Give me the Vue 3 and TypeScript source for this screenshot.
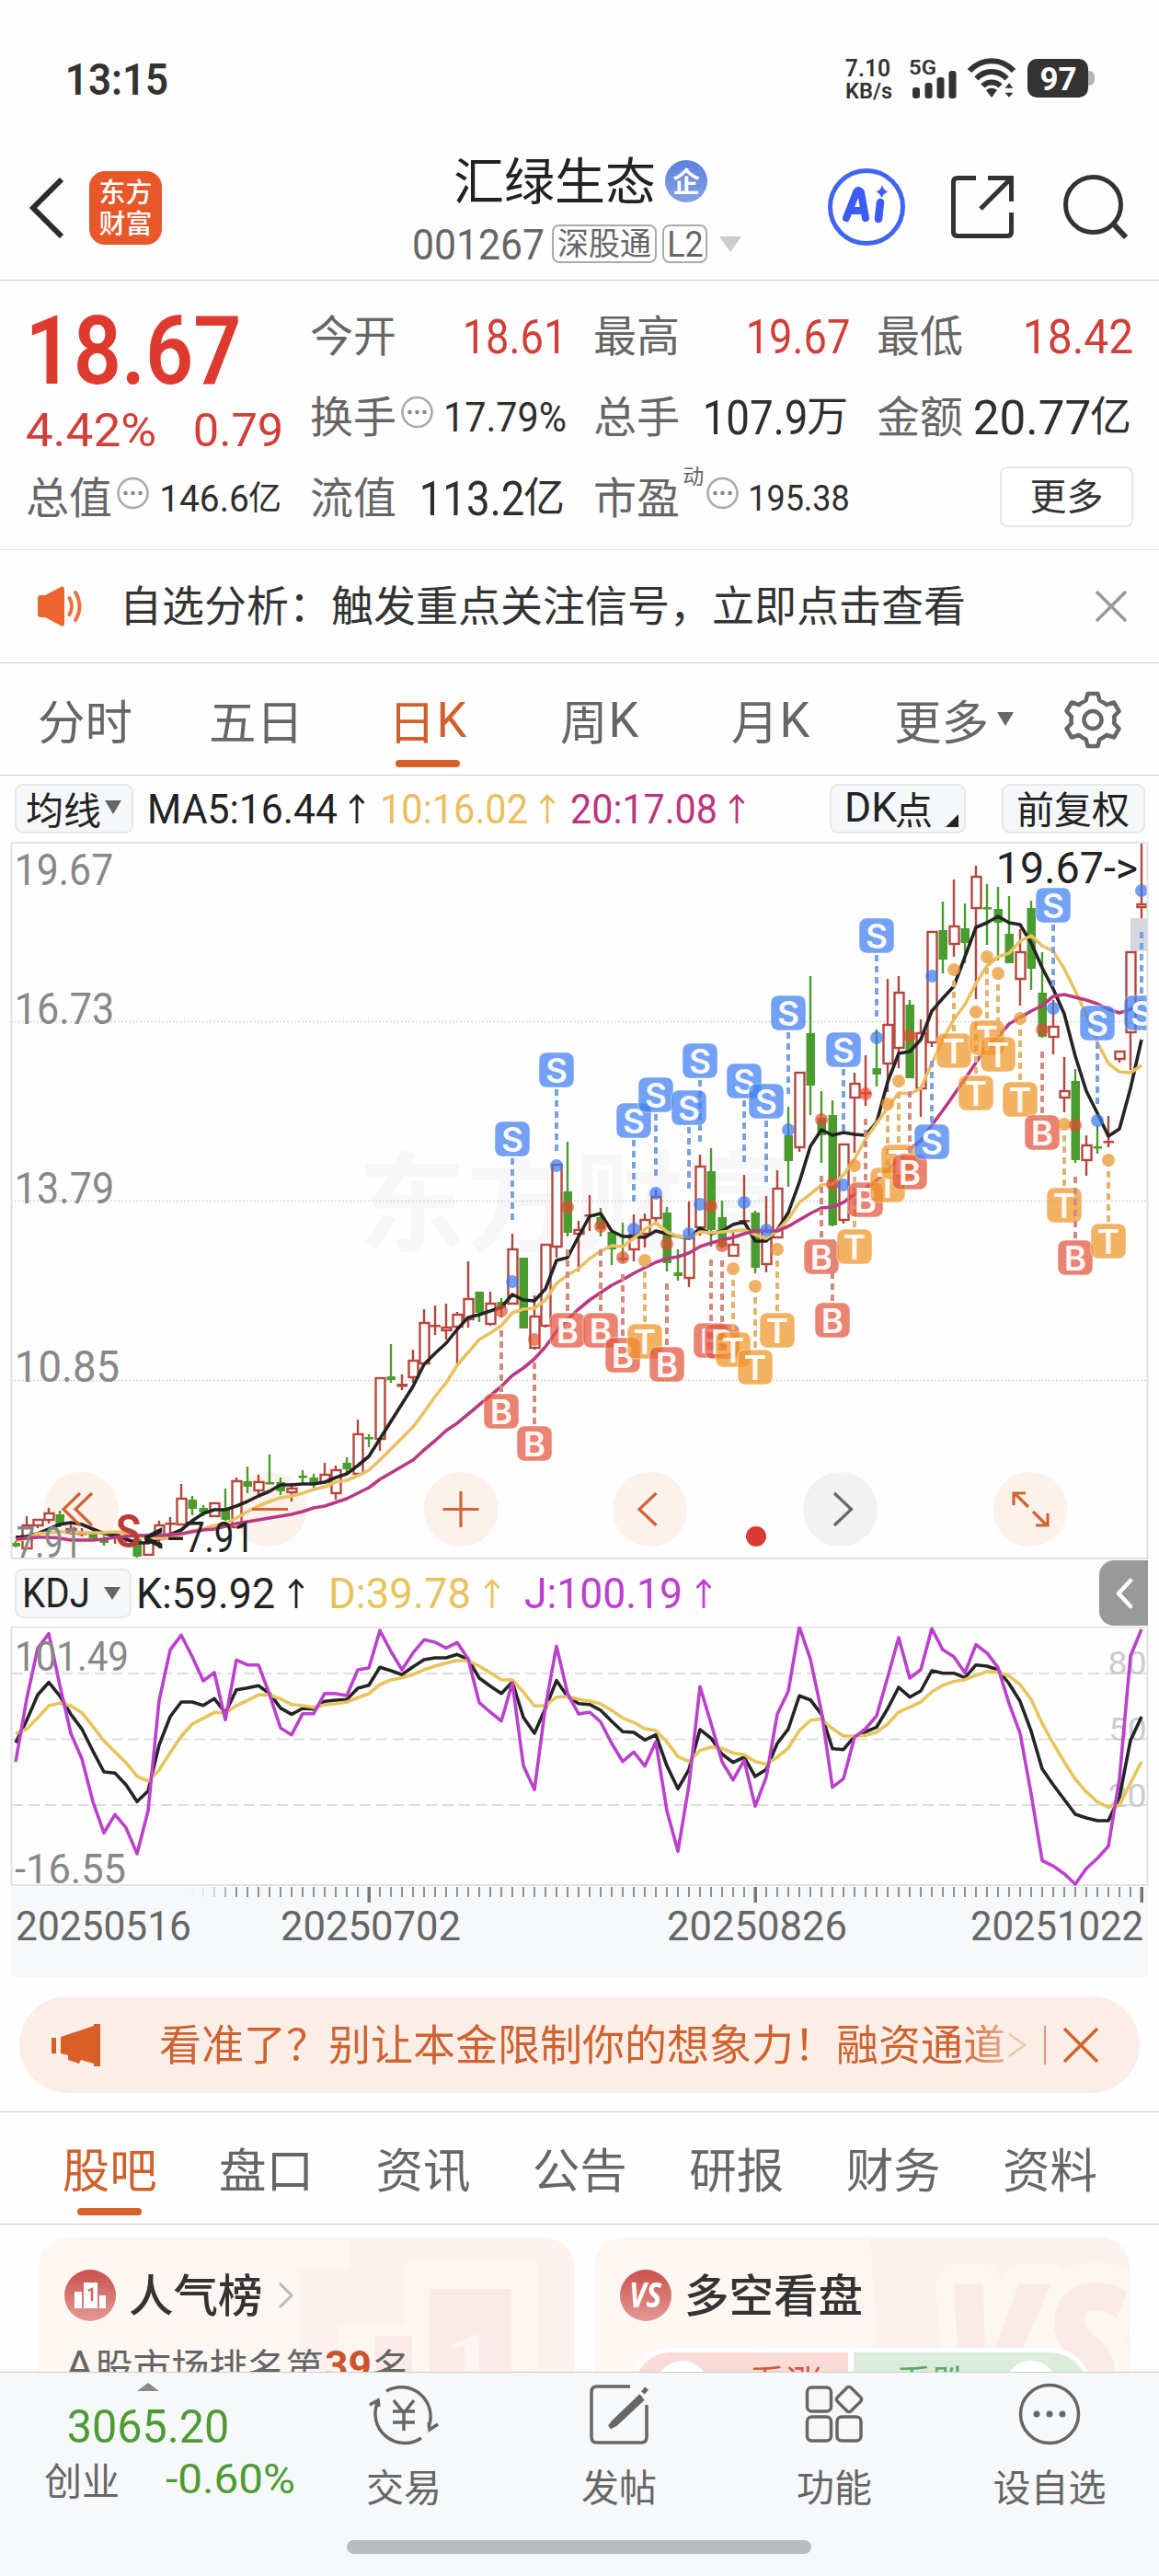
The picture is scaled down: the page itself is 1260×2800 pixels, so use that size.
<script setup lang="ts">
import { h } from 'vue'

interface NumProps { t: string; w: number; cap: number; weight?: number; x?: number; y?: number; fill?: string }

// A line of figures fitted to an exact ink width and cap height.
const Label = (p: NumProps) => {
  const size = p.cap / 0.711
  return h('text', {
    x: (p.x ?? 0) - size * 0.045,
    y: p.y ?? p.cap,
    'font-size': size,
    'font-weight': p.weight ?? 400,
    'font-family': '"Roboto", "Noto Sans CJK SC", sans-serif',
    fill: p.fill ?? 'currentColor',
    textLength: p.w + size * 0.09,
    lengthAdjust: 'spacingAndGlyphs',
  }, p.t)
}
const Num = (p: NumProps) =>
  h('svg', { width: p.w, height: p.cap, viewBox: `0 0 ${p.w} ${p.cap}`, style: 'overflow:visible;flex:none;display:block' }, [
    h(Label, { t: p.t, w: p.w, cap: p.cap, weight: p.weight }),
  ])
const Up = () =>
  h('svg', { width: 18, height: 32, viewBox: '0 0 18 32', fill: 'none', stroke: 'currentColor', 'stroke-width': 2.8, style: 'flex:none;display:block' }, [
    h('path', { d: 'M9 32V2M1.5 10L9 2l7.5 8' }),
  ])
const Dots = () =>
  h('svg', { width: 35, height: 36, viewBox: '0 0 35 36', style: 'flex:none;display:block' }, [
    h('circle', { cx: 17.5, cy: 18, r: 16, fill: 'none', stroke: '#aaa', 'stroke-width': 2.6 }),
    ...[9.5, 17.5, 25.5].map((cx) => h('circle', { cx, cy: 18, r: 2.3, fill: '#888' })),
  ])

const px = (i: number) => 17 + 12 * i

// [rising?, body top, body bottom, high, low]
type Candle = [number, number, number, number, number]
const candles: Candle[] = [
  [0,1677,1681,1675,1682],[1,1657,1683,1648,1683],[1,1651,1658,1651,1661],[1,1644,1652,1639,1656],[0,1646,1658,1642,1660],
  [1,1661,1666,1656,1668],[1,1667,1667,1661,1670],[0,1666,1672,1664,1673],[0,1673,1677,1670,1680],[1,1668,1668,1664,1678],
  [1,1666,1666,1660,1676],[0,1673,1692,1673,1695],[1,1675,1690,1673,1690],[1,1657,1673,1653,1683],[1,1656,1656,1649,1666],
  [1,1628,1657,1613,1657],[0,1630,1640,1626,1647],[0,1639,1644,1636,1648],[1,1633,1648,1633,1648],[0,1640,1652,1618,1653],
  [1,1609,1660,1606,1660],[0,1610,1616,1594,1623],[1,1610,1620,1603,1628],[0,1611,1613,1581,1613],[0,1611,1621,1606,1625],
  [1,1617,1622,1612,1632],[0,1605,1605,1598,1612],[0,1606,1612,1602,1617],[1,1602,1611,1590,1613],[1,1597,1623,1593,1630],
  [0,1590,1597,1584,1602],[1,1558,1602,1543,1602],[0,1563,1563,1559,1573],[1,1497,1564,1497,1577],[0,1496,1500,1461,1503],
  [1,1505,1506,1494,1511],[1,1478,1497,1467,1503],[1,1437,1482,1423,1483],[1,1441,1441,1419,1451],[1,1442,1446,1417,1456],
  [1,1428,1442,1426,1482],[1,1411,1434,1371,1443],[0,1404,1427,1404,1437],[1,1416,1439,1404,1441],[0,1415,1422,1411,1432],
  [1,1357,1417,1341,1417],[0,1367,1444,1367,1444],[1,1430,1465,1408,1467],[1,1352,1441,1352,1443],[1,1265,1355,1265,1367],
  [0,1295,1340,1241,1344],[1,1336,1341,1327,1382],[1,1321,1321,1299,1338],[0,1323,1336,1313,1344],[0,1339,1358,1338,1375],
  [0,1368,1368,1329,1372],[1,1341,1358,1320,1371],[1,1325,1341,1319,1356],[1,1300,1324,1293,1328],[0,1318,1373,1312,1382],
  [0,1383,1387,1358,1392],[1,1344,1389,1306,1399],[1,1267,1334,1255,1343],[0,1273,1337,1248,1355],[0,1323,1355,1305,1357],
  [1,1352,1365,1338,1365],[1,1327,1327,1277,1330],[0,1318,1378,1316,1384],[1,1337,1374,1300,1383],[1,1291,1345,1272,1345],
  [0,1234,1262,1203,1290],[1,1165,1247,1165,1252],[0,1123,1180,1061,1212],[0,1215,1234,1186,1264],[0,1212,1332,1196,1333],
  [1,1243,1326,1243,1330],[1,1177,1193,1166,1253],[1,1188,1188,1147,1202],[0,1161,1168,1119,1181],[1,1113,1156,1064,1187],
  [1,1078,1139,1061,1161],[0,1092,1172,1087,1172],[1,1122,1183,1108,1214],[1,1012,1133,1012,1138],[0,1011,1043,980,1058],
  [1,1006,1026,956,1040],[0,1009,1025,982,1047],[1,952,987,941,1086],[0,987,987,961,1027],[0,988,1003,964,1044],
  [0,1015,1047,974,1047],[1,1034,1064,1010,1093],[0,987,1053,979,1076],[0,1079,1127,1035,1128],[1,1115,1127,1087,1146],
  [1,1185,1193,1149,1209],[0,1175,1261,1162,1264],[1,1244,1261,1234,1278],[0,1247,1247,1223,1254],[1,1241,1241,1213,1247],
  [1,1142,1151,1142,1155],[1,1034,1122,1034,1163],[1,982,986,916,998],
]
const rising = '#b5463d'
const falling = '#4a9c2e'

const ma5 = [1671,1670,1667,1662,1657,1655,1657,1662,1667,1669,1673,1677,1677,1672,1668,1663,1653,1645,1641,1641,1637,1632,1626,1621,1614,1614,1613,1613,1611,1606,1602,1593,1583,1564,1545,1526,1507,1483,1471,1460,1445,1432,1429,1425,1421,1407,1413,1414,1401,1370,1367,1344,1322,1319,1338,1344,1344,1345,1338,1341,1344,1346,1335,1341,1338,1331,1328,1349,1349,1337,1318,1285,1246,1228,1234,1231,1233,1234,1220,1176,1145,1143,1130,1099,1085,1072,1040,1008,1003,996,1003,1005,1025,1052,1075,1102,1148,1186,1210,1235,1227,1183,1130]
const ma10 = [1675,1672,1667,1666,1665,1665,1666,1666,1666,1665,1666,1669,1672,1672,1672,1668,1664,1662,1658,1656,1650,1643,1637,1632,1628,1626,1623,1619,1616,1611,1609,1604,1598,1587,1575,1563,1551,1535,1518,1503,1484,1470,1456,1449,1441,1427,1423,1422,1413,1395,1386,1379,1368,1360,1354,1355,1346,1336,1329,1339,1344,1345,1339,1340,1339,1338,1337,1342,1346,1338,1325,1307,1298,1288,1287,1277,1260,1238,1221,1204,1188,1189,1183,1156,1130,1108,1092,1069,1050,1040,1036,1023,1017,1028,1034,1053,1077,1103,1133,1156,1165,1166,1158]
const ma20 = [1673,1672,1671,1671,1672,1674,1674,1674,1673,1671,1670,1669,1669,1669,1668,1667,1665,1663,1662,1659,1656,1654,1652,1650,1648,1646,1643,1639,1637,1633,1629,1623,1617,1608,1601,1594,1587,1576,1566,1555,1547,1537,1527,1517,1507,1495,1487,1477,1464,1447,1434,1423,1413,1405,1397,1391,1384,1378,1372,1368,1366,1362,1355,1351,1348,1345,1341,1338,1338,1338,1333,1326,1319,1313,1312,1307,1298,1292,1283,1272,1260,1249,1240,1223,1207,1190,1173,1155,1137,1127,1113,1106,1099,1093,1083,1081,1084,1087,1091,1097,1101,1097,1088]
const line = (ys: number[]) => ys.map((y, i) => `${px(i)},${y}`).join(' ')

// [letter, candle index, badge top, signal dot, badge sits below its stem?]
type Signal = ['S' | 'B' | 'T', number, number, number, boolean]
const signals: Signal[] = [
  ['B',44,1515,1425,true],['S',45,1219,1393,false],['B',47,1550,1456,true],['S',49,1144,1267,false],['B',50,1427,1312,true],
  ['B',53,1427,1333,true],['B',55,1454,1367,true],['S',56,1199,1336,false],['T',57,1439,1370,true],['S',58,1171,1297,false],
  ['B',59,1464,1352,true],['S',62,1134,1309,false],['S',61,1185,1341,false],['B',63,1438,1311,true],['B',64,1439,1354,true],
  ['T',65,1448,1379,true],['S',66,1156,1307,false],['T',67,1467,1398,true],['S',68,1178,1337,false],['T',69,1427,1358,true],
  ['S',70,1082,1228,false],['B',73,1347,1217,true],['B',74,1416,1287,true],['S',75,1122,1288,false],['T',76,1336,1267,true],
  ['B',77,1285,1189,true],['S',78,998,1128,false],['T',79,1269,1200,true],['T',80,1244,1175,true],['B',81,1255,1126,true],
  ['S',83,1222,1061,true],['T',85,1123,1054,true],['T',87,1169,1100,true],['T',88,1109,1040,true],['T',89,1127,1058,true],
  ['T',91,1176,1107,true],['B',93,1212,1119,true],['S',94,965,1096,false],['T',95,1291,1222,true],['B',96,1348,1223,true],
  ['S',98,1093,1218,false],['T',99,1330,1261,true],['S',102,1082,968,true],
]
const badge = { S: 'rgba(67,129,242,.75)', B: 'rgba(228,85,62,.73)', T: 'rgba(238,150,40,.73)' }
const stem = { S: '#7aa2de', B: '#d38a7e', T: '#e2b36a' }
const dot = { S: 'rgba(60,120,240,.72)', B: 'rgba(232,72,45,.68)', T: 'rgba(240,150,45,.75)' }

// Oscillator samples, in thirds of a pixel below the indicator header
const kLine = [643,570,487,446,490,550,598,670,738,742,780,835,800,650,558,510,510,521,499,545,470,464,457,482,530,550,531,533,508,504,502,465,455,397,408,421,395,372,366,366,355,371,432,458,482,445,560,612,530,440,492,515,518,537,573,607,609,634,617,718,793,730,600,628,680,707,690,753,730,645,598,490,503,550,662,665,622,607,592,532,462,494,474,408,416,416,431,389,393,405,450,508,605,728,780,828,876,888,897,897,820,635,558]
const dLine = [613,598,562,522,514,522,545,590,637,673,708,752,768,732,675,622,582,563,544,545,522,505,487,486,500,518,522,528,519,516,510,496,483,453,438,431,420,405,393,383,375,375,393,415,437,438,478,523,522,494,492,501,507,516,538,562,577,597,603,640,688,704,668,657,661,677,682,704,713,690,660,603,570,565,597,621,621,619,608,582,543,527,510,477,455,443,437,423,411,412,425,453,502,580,645,705,762,803,836,853,847,775,704]
const jLine = [705,500,335,287,455,612,695,835,937,877,920,1005,865,505,340,292,362,441,414,568,373,389,389,485,595,617,548,548,482,483,489,405,399,277,345,405,350,307,315,334,316,370,512,543,572,448,718,796,525,328,482,549,543,575,645,704,673,719,640,865,997,780,460,580,705,764,700,850,755,550,475,265,370,540,788,760,625,597,555,430,300,432,405,271,340,362,415,323,350,398,515,612,810,1027,1045,1070,1104,1053,1020,980,760,360,273]
const osc = (vs: number[]) => line(vs.map((v) => Math.round((1680 + v / 3) * 10) / 10))

const ticks = Array.from({ length: 87 }, (_, k) => k + 16)
const major = [32, 67, 102]
const infoTabs = ['股吧', '盘口', '资讯', '公告', '研报', '财务', '资料']
</script>

<template>
  <main class="screen">
    <section class="status">
      <Num class="clock" t="13:15" :w="108" :cap="34" :weight="600" />
      <div class="rate">
        <Num t="7.10" :w="47" :cap="18" :weight="600" />
        <Num t="KB/s" :w="49" :cap="16.500" :weight="600" />
      </div>
      <svg width="52" height="44" viewBox="0 0 52 44" class="signal">
        <Label t="5G" :w="28" :cap="16" :weight="600" :y="18" />
        <g fill="#333"><rect x="3" y="32" width="8" height="12" rx="3" /><rect x="16.500" y="27" width="8" height="17" rx="3" /><rect x="29.500" y="21" width="8" height="23" rx="3" /><rect x="42.500" y="14" width="8" height="30" rx="3" /></g>
      </svg>
      <svg width="54" height="44" viewBox="0 0 54 44" class="wifi" fill="none" stroke="#333" stroke-width="6">
        <path d="M3 14C16 -.5 38 -.5 51 14M10.500 22.500c9-10 24-10 33 0M17.500 30.500c5-5.500 14-5.500 19 0" />
        <path d="M27 43l-6-8c4-3 8-3 12 0z" fill="#333" stroke="none" />
        <path d="M46 26l6 7.500h-12zM46 44l6-7h-12z" fill="#333" stroke="#fff" stroke-width="1.500" />
      </svg>
      <div class="battery"><Num t="97" :w="37" :cap="25" :weight="700" /></div>
      <i class="nub"></i>
    </section>

    <header class="top">
      <svg class="back" width="40" height="66" viewBox="0 0 40 66" fill="none" stroke="#2c2c2c" stroke-width="6"><path d="M36 2L5 33l31 31" /></svg>
      <div class="logo"><span>东方</span><span>财富</span></div>
      <div class="name">
        <div class="name-row"><h1>汇绿生态</h1><b class="qi">企</b></div>
        <div class="code-row">
          <Num t="001267" :w="140" :cap="33" />
          <span class="tag sgt">深股通</span>
          <span class="tag l2"><Num t="L2" :w="36" :cap="27" /></span>
          <i class="caret"></i>
        </div>
      </div>
      <svg class="ai" width="86" height="86" viewBox="0 0 86 86">
        <circle cx="43" cy="43" r="39.500" fill="#fff" stroke="#4064ee" stroke-width="5" />
        <path d="M21 55L32 27q2-4 5 0l5 28M25 47h15" fill="none" stroke="#3a5cf2" stroke-width="8" stroke-linecap="round" stroke-linejoin="round" />
        <path d="M58 38l-2 18" stroke="#3a5cf2" stroke-width="8.500" stroke-linecap="round" />
        <path d="M60 19q1.500 6 6.500 7.500q-5.500 1.500-7 7q-1.500-5.500-6-7q5-1.500 6.500-7.500z" fill="#3a5cf2" />
      </svg>
      <svg class="share" width="72" height="72" viewBox="0 0 72 72" fill="none" stroke="#333" stroke-width="5">
        <path d="M29 4.500H9q-4.500 0-4.500 4.500v54q0 4.500 4.500 4.500h54q4.500 0 4.500-4.500V42M42 4.500h25.500V30M67 5L34 38" />
      </svg>
      <svg class="search" width="72" height="72" viewBox="0 0 72 72" fill="none" stroke="#333" stroke-width="5"><circle cx="33.500" cy="33.500" r="30" /><path d="M55 54l14 15" stroke-width="6" /></svg>
    </header>

    <section class="quote">
      <div class="price">
        <Num t="18.67" :w="226" :cap="74" :weight="600" />
        <div class="chg"><Num t="4.42%" :w="138" :cap="36" /><Num t="0.79" :w="94" :cap="36" /></div>
      </div>
      <div class="cell"><span>今开</span><Num class="red" t="18.61" :w="109" :cap="37" /></div>
      <div class="cell"><span>最高</span><Num class="red" t="19.67" :w="109" :cap="37" /></div>
      <div class="cell"><span>最低</span><Num class="red" t="18.42" :w="116" :cap="37" /></div>
      <div class="cell"><span>换手</span><Dots class="dots" /><Num class="ink" t="17.79%" :w="130" :cap="31" /></div>
      <div class="cell"><span>总手</span><p class="ink"><Num t="107.9" :w="110" :cap="37" /><em>万</em></p></div>
      <div class="cell"><span>金额</span><p class="ink"><Num t="20.77" :w="124" :cap="37" /><em>亿</em></p></div>
      <div class="cell"><span>总值</span><Dots class="dots" /><p class="ink small"><Num t="146.6" :w="94" :cap="29" /><em>亿</em></p></div>
      <div class="cell"><span>流值</span><p class="ink"><Num t="113.2" :w="110" :cap="37" /><em>亿</em></p></div>
      <div class="cell"><span>市盈</span><sup>动</sup><Dots class="dots pe" /><Num class="ink" t="195.38" :w="107" :cap="28" /></div>
      <div class="cell end"><button class="more">更多</button></div>
    </section>

    <section class="notice">
      <svg width="52" height="44" viewBox="0 0 52 44"><path d="M1 13q0-3 3-3h5L26 1q4-2 4 3v36q0 5-4 3L9 34H4q-3 0-3-3z" fill="#ec6530" /><path d="M35.500 13q5 9 0 18M42 7q9 15 0 30" fill="none" stroke="#ec7140" stroke-width="4" stroke-linecap="round" /></svg>
      <p>自选分析：触发重点关注信号，立即点击查看</p>
      <svg class="x" width="34" height="34" viewBox="0 0 34 34" stroke="#999" stroke-width="3.600"><path d="M1 1l32 32M33 1L1 33" /></svg>
    </section>

    <nav class="periods">
      <span style="width:103px">分时</span><span style="width:103px">五日</span>
      <span class="on" style="width:84px">日<Num class="k" t="K" :w="28" :cap="38" /></span>
      <span style="width:84px">周<Num class="k" t="K" :w="28" :cap="38" /></span>
      <span style="width:84px">月<Num class="k" t="K" :w="28" :cap="38" /></span>
      <span style="width:130px">更多<i class="tri"></i></span>
      <svg width="64" height="64" viewBox="0 0 64 64" fill="none" stroke="#666" stroke-width="4.500" stroke-linejoin="round">
        <path d="M26.500 4h11l2 7.500q4 1.500 7.500 4.500l8-2.500 5.500 9.500-5.500 6q1 3.500 0 7l5.500 6-5.500 9.500-8-2.500q-3.500 3-7.500 4.500l-2 7.500h-11l-2-7.500q-4-1.500-7.500-4.500l-8 2.500L3.500 42l5.500-6q-1-3.500 0-7l-5.500-6L9 13.500l8 2.500q3.500-3 7.500-4.500z" /><circle cx="32" cy="32.500" r="9.500" />
      </svg>
    </nav>

    <section class="ma">
      <button class="pill avg">均线<i class="tri"></i></button>
      <p style="color:#222"><Num t="MA5:16.44" :w="203" :cap="31" /><Up /></p>
      <p style="color:#eabd5e"><Num t="10:16.02" :w="157" :cap="31" /><Up /></p>
      <p style="color:#ba3480"><Num t="20:17.08" :w="156" :cap="31" /><Up /></p>
      <button class="pill dk"><Num t="DK" :w="53" :cap="31" />点<i class="corner"></i></button>
      <button class="pill fq">前复权</button>
    </section>

    <svg class="chart" width="1260" height="780" viewBox="0 915 1260 780">
      <defs><clipPath id="plot"><rect x="12" y="915" width="1236" height="780" /></clipPath></defs>
      <text x="389" y="1351" font-size="118" font-weight="700" font-family="Noto Sans CJK SC, sans-serif" fill="#f7f7f7">东方财富</text>
      <g stroke="#d5d5d5" stroke-width="1.500" stroke-dasharray="2 2"><path d="M12 1110.500H1248M12 1305.500H1248M12 1500.500H1248" /></g>
      <g fill="#fcf1eb"><circle v-for="cx in [88, 293, 501, 706.5, 1120]" :key="cx" :cx="cx" cy="1640.500" r="40.500" /><circle cx="913.500" cy="1640.500" r="40.500" fill="#f2f2f2" /></g>
      <rect x="1229" y="998" width="19" height="36" fill="#d5d7de" />
      <g clip-path="url(#plot)">
        <g v-for="(c, i) in candles" :key="i">
          <template v-if="c[0]">
            <path :d="`M${px(i)} ${c[3]}V${c[1]}M${px(i)} ${c[2]}V${c[4]}`" :stroke="rising" stroke-width="2.400" />
            <rect v-if="c[2] - c[1] > 2" :x="px(i) - 4.500" :y="c[1] + 1" width="10" :height="c[2] - c[1] - 1" fill="#fff" :stroke="rising" stroke-width="2.400" />
            <rect v-else :x="px(i) - 5.500" :y="c[1] - 1" width="11.500" :height="2.500 + c[2] - c[1]" :fill="rising" />
          </template>
          <template v-else>
            <path :d="`M${px(i)} ${c[3]}V${c[4]}`" :stroke="falling" stroke-width="2.400" />
            <rect :x="px(i) - 4.500" :y="c[1] === c[2] ? c[1] - 1 : c[1]" width="9.500" :height="Math.max(2.500, c[2] - c[1])" :fill="falling" />
          </template>
        </g>
        <g fill="none" stroke-linejoin="round">
          <polyline :points="line(ma5)" stroke="#242424" stroke-width="3.600" />
          <polyline :points="line(ma10)" stroke="#eac062" stroke-width="3.600" />
          <polyline :points="line(ma20)" stroke="#b93a82" stroke-width="3.600" />
        </g>
        <g v-for="(s, k) in signals" :key="'s' + k">
          <circle :cx="px(s[1])" :cy="s[3]" r="7" :fill="dot[s[0]]" />
          <path :d="s[4] ? `M${px(s[1])} ${s[2] - 69}v67` : `M${px(s[1])} ${s[2] + 40}v67`" :stroke="stem[s[0]]" stroke-width="4" stroke-dasharray="7 5" />
          <rect :x="px(s[1]) - 19" :y="s[2]" width="38" height="38" rx="8" :fill="badge[s[0]]" stroke="rgba(255,255,255,.5)" stroke-width="1" />
          <text :x="px(s[1])" :y="s[2] + 32.500" text-anchor="middle" font-size="37" font-weight="600" font-family="Inter, Roboto, sans-serif" fill="#fff" fill-opacity=".95">{{ s[0] }}</text>
        </g>
      </g>
      <g fill="none" stroke="#cf6434" stroke-width="3.200">
        <path d="M87 1623L69 1640.500l18 17.500M100 1623l-18 17.500 18 17.500M274 1640.500h39M481.500 1640.500h39M501 1621v39M713.500 1623L695 1640.500l18.500 17.500" />
        <path d="M907 1623l18.500 17.500L907 1658" stroke="#666" />
        <path d="M1118 1638L1103 1623M1102 1636v-13h13M1123 1643l15 15M1139 1645v13h-13" />
      </g>
      <circle cx="822" cy="1670" r="11" fill="#dc3a32" />
      <g fill="none" stroke="#e2e2e2" stroke-width="2"><path d="M12 916H1248M12.500 915V1694M1247.500 915V1694M12 1694H1248" /></g>
      <Label t="19.67" :x="18" :y="962" :w="103" :cap="34" fill="#888" />
      <Label t="16.73" :x="18" :y="1113" :w="104" :cap="34" fill="#888" />
      <Label t="13.79" :x="18" :y="1307.500" :w="104" :cap="34" fill="#888" />
      <Label t="10.85" :x="18" :y="1502" :w="110" :cap="34" fill="#888" />
      <Label t="7.91" :x="20" :y="1693" :w="67" :cap="34" fill="#888" />
      <Label t="19.67-&gt;" :x="1085" :y="960" :w="150" :cap="34" fill="#222" />
      <Label t="S" :x="128" :y="1682" :w="23" :cap="35" :weight="600" fill="#b93d35" />
      <Label t="&lt;" :x="158" :y="1688" :w="19" :cap="37" :weight="500" fill="#222" />
      <Label t="-" :x="184" :y="1686" :w="14" :cap="33" fill="#222" />
      <Label t="7.91" :x="203" :y="1686.500" :w="71" :cap="33" fill="#222" />
    </svg>

    <section class="kdj">
      <button class="pill kd"><Num t="KDJ" :w="70" :cap="31" /><i class="tri"></i></button>
      <p style="color:#222"><Num t="K:59.92" :w="147" :cap="33" /><Up /></p>
      <p style="color:#e8c35c"><Num t="D:39.78" :w="151" :cap="33" /><Up /></p>
      <p style="color:#bd3fcd"><Num t="J:100.19" :w="168" :cap="33" /><Up /></p>
      <div class="fold"><svg width="20" height="34" viewBox="0 0 20 34" fill="none" stroke="#fff" stroke-width="4.500" stroke-linecap="round" stroke-linejoin="round"><path d="M17 3L4 17l13 14" /></svg></div>
    </section>

    <svg class="chart" width="1260" height="282" viewBox="0 1768 1260 282">
      <g fill="none" stroke="#e2e2e2" stroke-width="2"><path d="M12 1768.500H1248M12.500 1768V2050M1247.500 1768V2050M12 2049H1248" /></g>
      <g stroke="#dedede" stroke-width="2" stroke-dasharray="12 6"><path d="M13 1819H1247M13 1890.500H1247M13 1962H1247" /></g>
      <Label t="80" :x="1206" :y="1820" :w="39" :cap="25" fill="#ccc" />
      <Label t="50" :x="1207" :y="1892" :w="38" :cap="25" fill="#ccc" />
      <Label t="20" :x="1206" :y="1963.500" :w="39" :cap="25" fill="#ccc" />
      <g fill="none" stroke-width="3.600" stroke-linejoin="round">
        <polyline :points="osc(kLine)" stroke="#242424" />
        <polyline :points="osc(dLine)" stroke="#e7c45c" />
        <polyline :points="osc(jLine)" stroke="#ba42cb" />
      </g>
      <Label t="101.49" :x="18" :y="1815.500" :w="120" :cap="31" fill="#888" />
      <Label t="-16.55" :x="18" :y="2046.500" :w="117" :cap="31" fill="#888" />
    </svg>

    <svg class="chart" width="1260" height="99" viewBox="0 2050 1260 99">
      <rect x="12" y="2051" width="1236" height="98" fill="#f7f8fa" />
      <rect v-for="i in ticks" :key="i" :x="major.includes(i) ? px(i) - 1.500 : px(i) - 0.800" y="2051" :width="major.includes(i) ? 3.500 : 1.600" :height="major.includes(i) ? 17 : 11" fill="#777" :opacity="Math.min(1, ((i - 15) / 5) ** 2)" />
      <Label t="20250516" :x="19" :y="2108.500" :w="187" :cap="31" fill="#666" />
      <Label t="20250702" :x="307" :y="2108.500" :w="192" :cap="31" fill="#666" />
      <Label t="20250826" :x="727" :y="2108.500" :w="192" :cap="31" fill="#666" />
      <Label t="20251022" :x="1057" :y="2108.500" :w="184" :cap="31" fill="#666" />
    </svg>

    <section class="promo">
      <svg width="54" height="46" viewBox="0 0 54 46" fill="#d95f28"><path d="M0 15h5v17H0zM10 14L46 2V0h7v46h-7v-3l-14-4-2 4-12-4v-5l-8-2z" /></svg>
      <p>看准了？别让本金限制你的想象力！融资通道</p>
      <svg class="go" width="22" height="26" viewBox="0 0 22 26" fill="none" stroke="#edc5ae" stroke-width="2.500"><path d="M2 1l17 12L2 25" /></svg>
      <i class="bar"></i>
      <svg width="38" height="38" viewBox="0 0 38 38" stroke="#d4622b" stroke-width="3.500"><path d="M1 1l36 36M37 1L1 37" /></svg>
    </section>

    <nav class="info"><span v-for="(t, i) in infoTabs" :key="t" :class="{ on: i === 0 }">{{ t }}</span></nav>

    <section class="cards">
      <article>
        <svg class="deco" width="582" height="146" viewBox="0 0 582 146"><path d="M338 0H582V146H283V34h55z" fill="#fcf2f0" /><path d="M398 25h145v121H398zM325 95h73v51h-73z" fill="#fdf6f3" /><path d="M425 56h89v90h-89zM366 107h40v39h-40z" fill="#faebe8" /><path d="M449 116l30-11v41h-16v-29l-14 4z" fill="#fdf5f3" /></svg>
        <div class="head">
          <svg width="56" height="56" viewBox="0 0 56 56"><defs><linearGradient id="rg" x2="0" y2="1"><stop stop-color="#c9504a" /><stop offset="1" stop-color="#e49a95" /></linearGradient></defs><circle cx="28" cy="28" r="28" fill="url(#rg)" /><path d="M11 24h8v18h-8zM21 14h15v28H21zM38 28h7v14h-7z" fill="#fff" /><path d="M26 23l4-2v13" fill="none" stroke="#d06a64" stroke-width="2.500" /></svg>
          <h2>人气榜</h2>
          <svg class="chev" width="18" height="28" viewBox="0 0 18 28" fill="none" stroke="#bbb" stroke-width="3"><path d="M2 1l13 13L2 27" /></svg>
        </div>
        <p class="rank"><Num t="A" :w="27" :cap="31" />股市场排名第<Num class="hot" t="39" :w="47" :cap="32" :weight="700" />名</p>
      </article>
      <article>
        <svg class="deco" width="582" height="146" viewBox="0 0 582 146"><path d="M300 0H582V146H310z" fill="#fcf2f0" /><text x="378" y="190" font-size="196" font-weight="800" font-style="italic" font-family="Open Sans, sans-serif" textLength="200" lengthAdjust="spacingAndGlyphs" fill="#faebe8" stroke="#fdf6f3" stroke-width="44" stroke-linejoin="round" paint-order="stroke">VS</text></svg>
        <div class="head">
          <svg width="56" height="56" viewBox="0 0 56 56"><circle cx="28" cy="28" r="28" fill="url(#rg)" /><text x="27.500" y="41" text-anchor="middle" font-size="37" font-weight="700" font-style="italic" font-family="Open Sans, sans-serif" textLength="35" lengthAdjust="spacingAndGlyphs" fill="#fff">VS</text></svg>
          <h2>多空看盘</h2>
        </div>
        <div class="vote"><div class="up"><i></i><span>看涨</span></div><div class="down"><span>看跌</span><i></i></div></div>
      </article>
    </section>

    <footer class="dock">
      <div class="index">
        <i class="peak"></i>
        <Num class="pts" t="3065.20" :w="172" :cap="35" />
        <p>创业<Num class="pct" t="-0.60%" :w="137" :cap="32" /></p>
      </div>
      <a style="width:234px">
        <svg width="78" height="68" viewBox="0 0 78 68" fill="none" stroke="#666" stroke-width="3.500"><path d="M20 9A32 32 0 0 1 66 48M58 60A32 32 0 0 1 11 20M2 24l9-5 1 7M76 45l-9 6-1-8M28 19l11 14 11-14M39 33v19M27 31h24M27 43h24" /></svg>交易
      </a>
      <a style="width:234px">
        <svg width="66" height="66" viewBox="0 0 66 66" fill="none" stroke="#666" stroke-width="3.500"><path d="M45 3H9q-6 0-6 6v49q0 6 6 6h48q6 0 6-6V23" /><path d="M57 13L27 42l-4 5 6-3L59 16M59 10l4-5" stroke-width="5" /></svg>发帖
      </a>
      <a style="width:234px">
        <svg width="66" height="66" viewBox="0 0 66 66" fill="none" stroke="#666" stroke-width="3.500"><rect x="3.500" y="4" width="26" height="26" rx="5" /><rect x="3.500" y="36" width="26" height="26" rx="5" /><rect x="36" y="36" width="26" height="26" rx="5" /><rect x="38.500" y="6.500" width="21" height="21" rx="3" transform="rotate(45 49 17)" /></svg>功能
      </a>
      <a style="width:234px">
        <svg width="68" height="68" viewBox="0 0 68 68" fill="none" stroke="#666" stroke-width="3.500"><circle cx="34" cy="34" r="31.500" /><g fill="#666" stroke="none"><circle cx="20" cy="34" r="3.500" /><circle cx="34" cy="34" r="3.500" /><circle cx="48" cy="34" r="3.500" /></g></svg>设自选
      </a>
      <i class="home"></i>
    </footer>
  </main>
</template>

<style>
body { background: #fefefe; }
</style>

<style scoped>
* { box-sizing: border-box; }
.screen { width: 1260px; height: 2800px; overflow: hidden; display: flex; flex-direction: column; background: #fefefe; color: #333; font-family: "Noto Sans CJK SC", sans-serif; }
.screen > * { flex: none; }
h1, h2, p { margin: 0; font-weight: 400; }
i, em { font-style: normal; display: block; }
button { font: inherit; color: inherit; padding: 0; margin: 0; }
.chart { display: block; }

.status { height: 140px; display: flex; align-items: flex-start; padding: 64px 0 0 73px; }
.clock { margin-top: 5px; }
.rate { margin-left: 739px; padding-top: 1px; display: flex; flex-direction: column; gap: 7px; width: 49px; }
.signal { margin-left: 20px; margin-top: -1px; overflow: visible; }
.wifi { margin-left: 10px; margin-top: -1px; }
.battery { margin-left: 12px; width: 66px; height: 42px; border-radius: 10px; background: #333; color: #fff; display: flex; align-items: center; justify-content: center; }
.nub { width: 7px; height: 16px; margin-top: 13px; border-radius: 0 6px 6px 0; background: #b5b5b5; }

.top { height: 165px; border-bottom: 1px solid #ccc; display: flex; align-items: flex-start; }
.back { margin: 53px 0 0 31px; }
.logo { margin: 46px 0 0 26px; width: 79px; height: 80px; border-radius: 17px; background: #e8572a; color: #fff; font-weight: 500; font-size: 29px; line-height: 34px; display: flex; flex-direction: column; align-items: center; padding-top: 4px; }
.name { margin: 0 0 0 274px; width: 360px; }
.name-row { display: flex; margin-left: 43px; }
h1 { font-size: 55px; line-height: 80px; height: 80px; margin-top: 13px; width: 222px; color: #222; white-space: nowrap; }
.qi { margin: 34px 0 0 8px; width: 46px; height: 46px; border-radius: 50%; background: linear-gradient(#5b80e0, #84a2e6); color: #fff; font-weight: 700; font-size: 30px; line-height: 42px; text-align: center; }
.code-row { display: flex; align-items: center; color: #666; margin-top: 11px; height: 42px; }
.tag { border: 2px solid #aaa; border-radius: 8px; height: 42px; display: flex; align-items: center; justify-content: center; font-size: 34px; line-height: 34px; }
.sgt { width: 114px; margin-left: 10px; padding-bottom: 4px; }
.l2 { width: 49px; margin-left: 6px; }
.caret { margin: 0 0 0 13px; border: 12.5px solid transparent; border-top: 17px solid #ccc; border-bottom: 0; }
.ai { margin: 42px 0 0 89px; }
.share { margin: 49px 0 0 47px; }
.search { margin: 49px 0 0 51px; }

.quote { height: 293px; padding: 16px 0 0 28px; display: grid; grid-template-columns: 278px 277px 277px 277px; column-gap: 31px; grid-template-rows: 88px 88px 88px; border-bottom: 1px solid #e4e4e4; }
.price { grid-row: span 2; color: #de3a30; padding: 22px 0 0 4px; }
.chg { display: flex; justify-content: space-between; margin: 32px 0 0 -2px; color: #d04038; }
.cell { display: flex; align-items: center; justify-content: space-between; color: #666; font-size: 47px; line-height: 60px; white-space: nowrap; }
.cell span { position: relative; top: -3px; width: 94px; }
.cell p { display: flex; align-items: center; gap: 1px; }
.cell em { font-size: 45px; line-height: 60px; position: relative; top: -3px; }
.cell .small em { font-size: 36px; }
.cell .red { color: #d04038; }
.cell .ink { color: #2e2e2e; }
.cell .dots { margin: -10px 8px 0 0; }
.cell .pe { margin-left: -2px; }
.cell sup { font-size: 23px; line-height: 24px; margin: -50px 0 0 -1px; color: #666; align-self: center; }
.end { justify-content: flex-end; }
.more { width: 145px; height: 66px; border: 2px solid #e6e6e6; border-radius: 8px; background: #fff; font-size: 40px; line-height: 50px; padding-bottom: 6px; color: #333; margin: -3px -2px 0 0; }

.notice { height: 123px; border-bottom: 1px solid #ccc; display: flex; align-items: center; padding-left: 40px; }
.notice p { font-size: 46px; line-height: 60px; margin-left: 38px; width: 920px; white-space: nowrap; position: relative; top: -4px; }
.notice .x { margin-left: 141px; }

.periods { height: 122px; border-bottom: 1px solid #ccc; display: flex; align-items: center; padding-left: 41px; color: #666; font-size: 51.500px; }
.periods span { height: 120px; line-height: 114px; display: flex; align-items: center; position: relative; white-space: nowrap; margin-right: 83px; }
.periods span:nth-child(2) { margin-right: 92px; }
.periods span:nth-child(3) { margin-right: 103px; }
.periods span:nth-child(4) { margin-right: 102px; }
.periods span:nth-child(5) { margin-right: 93px; }
.periods span:nth-child(6) { margin-right: 54px; }
.periods .k { margin-left: 3px; }
.on { color: #d0602c; }
.periods .on::after { content: ""; position: absolute; left: 8px; bottom: 8px; width: 70px; height: 8px; border-radius: 4px; background: #d6612a; }
.tri { border: 9px solid transparent; border-top: 15px solid #666; border-bottom: 0; margin-left: 9px; }

.ma { height: 72px; position: relative; display: flex; align-items: center; padding: 0 0 0 16px; }
.ma p, .kdj p { display: flex; align-items: center; gap: 14px; margin-right: 18px; }
.pill { border: 2px solid #e7e8ea; border-radius: 9px; background: #f6f7f9; height: 54px; display: flex; align-items: center; color: #222; font-size: 41px; line-height: 46px; white-space: nowrap; }
.avg { width: 129px; padding-left: 10px; padding-bottom: 3px; margin-right: 17px; }
.avg .tri { margin-left: 4px; }
.dk { width: 148px; padding: 0 0 3px 16px; margin-left: 74px; position: relative; }
.corner { position: absolute; right: 6px; bottom: 5px; border-left: 14px solid transparent; border-bottom: 14px solid #222; }
.fq { width: 156px; margin-left: 39px; padding: 0 0 4px 14px; }

.kdj { height: 73px; display: flex; align-items: center; padding-left: 16px; position: relative; }
.kdj p { gap: 16px; margin-right: 28px; }
.kd { width: 127px; padding-left: 8px; margin-right: 7px; }
.kd .tri { margin-left: 17px; border-top-width: 14px; }
.fold { position: absolute; right: 12px; top: 1px; width: 53px; height: 71px; border-radius: 16px 0 0 16px; background: #999; display: flex; align-items: center; justify-content: center; }

.promo { margin: 21px 0 20px 21px; width: 1218px; height: 105px; border-radius: 53px; background: #fbeee6; display: flex; align-items: center; padding-left: 35px; color: #cf622f; }
.promo p { font-size: 46px; line-height: 60px; width: 920px; margin-left: 63px; white-space: nowrap; position: relative; top: -4px; -webkit-mask-image: linear-gradient(90deg, #000 870px, rgba(0,0,0,.45) 920px); mask-image: linear-gradient(90deg, #000 870px, rgba(0,0,0,.45) 920px); }
.go { margin-left: 2px; }
.bar { width: 2px; height: 42px; background: #dd9a78; margin: 0 19px 0 18px; }

.info { height: 123px; border-top: 1px solid #ccc; border-bottom: 1px solid #ccc; display: flex; padding-left: 34px; font-size: 51.500px; color: #666; }
.info span { width: 170.4px; text-align: center; line-height: 120px; position: relative; }
.info .on { color: #d0602c; }
.info .on::after { content: ""; position: absolute; left: 50px; bottom: 9px; width: 70px; height: 8px; border-radius: 4px; background: #d6612a; }

.cards { height: 160px; padding: 14px 0 0 42px; display: flex; gap: 22px; overflow: hidden; }
article { width: 582px; height: 300px; border-radius: 32px; background: #fdf7f4; position: relative; overflow: hidden; flex: none; }
.deco { position: absolute; left: 0; top: 0; }
.head { position: relative; display: flex; align-items: center; padding: 35px 0 0 28px; height: 91px; }
h2 { font-size: 48.500px; line-height: 60px; font-weight: 500; margin-left: 14px; position: relative; top: -3px; }
.chev { margin-left: 16px; }
.rank { position: relative; display: flex; align-items: center; margin: 18px 0 0 31px; font-size: 41.500px; line-height: 60px; color: #666; gap: 3px; }
.hot { color: #d0522c; }
.vote { position: absolute; left: 38px; top: 120px; width: 503px; height: 90px; border: 5px solid #fff; border-radius: 45px; overflow: hidden; display: flex; background: #fff; gap: 6px; font-size: 40px; line-height: 62px; }
.vote > div { height: 80px; display: flex; flex: 1; padding-top: 9px; }
.vote i { width: 58px; height: 58px; border-radius: 50%; background: #fff; }
.vote span { margin-top: -9px; }
.up { background: #f8dbd7; color: #cf5a34; padding-left: 24px; }
.up span { margin-left: 43px; }
.down { background: #daecdb; color: #5aaa66; padding-left: 46px; }
.down span { margin-right: 38px; }

.dock { height: 222px; background: #f6f8fa; border-top: 1px solid #ccc; display: flex; position: relative; color: #666; font-size: 41px; }
.dock a { display: flex; flex-direction: column; align-items: center; padding-top: 11px; line-height: 60px; height: 160px; white-space: nowrap; }
.dock a svg { height: 68px; margin-bottom: 13px; }
.index { width: 322px; position: relative; display: flex; flex-direction: column; }
.peak { margin: 11px 0 0 149px; width: 24px; border: 12px solid transparent; border-bottom: 9px solid #888; border-top: 0; }
.pts { margin: 21px 0 0 75px; color: #4e9b34; }
.index p { display: flex; align-items: center; margin: 9px 0 0 48px; line-height: 60px; }
.pct { margin-left: 52px; color: #4e9b34; }
.home { position: absolute; left: 377px; top: 182px; width: 505px; height: 15px; border-radius: 8px; background: #bbbcbe; }
</style>
